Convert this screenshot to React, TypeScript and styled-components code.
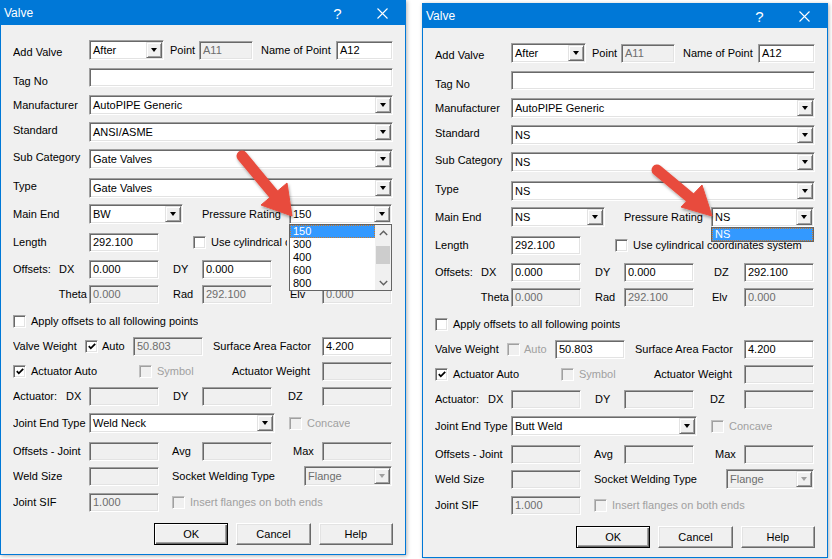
import styled, { createGlobalStyle } from 'styled-components';

const GlobalStyle = createGlobalStyle`
  html, body {
    margin: 0;
    padding: 0;
    background: #fff;
  }
  body {
    font-family: "Liberation Sans", Arial, sans-serif;
    font-size: 11px;
    color: #000;
  }
`;

type DialogProps = {
  top: number;
  standard: string;
  subCategory: string;
  valveType: string;
  mainEnd: string;
  pressure: string;
  ratings: string[];
  scroll?: boolean;
  autoWeight: boolean;
  jointEnd: string;
  // width left for the cylindrical label when the open list lies over it
  cylClip?: number;
  dzCovered?: boolean;
};

function Check({ checked, disabled, ml }: { checked?: boolean; disabled?: boolean; ml?: number }) {
  return (
    <CheckBox $disabled={disabled} $ml={ml}>
      {checked && (
        <svg width='8' height='7' viewBox='0 0 8 7'>
          <path d='M0.8 3.2 L2.8 5.3 L7.2 0.9' fill='none' stroke='#000' strokeWidth='1.8' />
        </svg>
      )}
    </CheckBox>
  );
}

function Combo({
  w,
  value,
  disabled,
  list,
  scroll,
}: {
  w: number;
  value: string;
  disabled?: boolean;
  list?: string[];
  scroll?: boolean;
}) {
  return (
    <ComboBox $w={w} $disabled={disabled}>
      <ComboValue $disabled={disabled}>{value}</ComboValue>
      <DropButton>
        <DownTriangle $disabled={disabled} />
      </DropButton>
      {list && (
        <DropList>
          <ListItems>
            {list.map((item, i) => (
              <ListItem key={item} $selected={i === 0}>
                {item}
              </ListItem>
            ))}
          </ListItems>
          {scroll && (
            <ScrollTrack>
              <ScrollArrow>
                <svg width='9' height='6' viewBox='0 0 9 6'>
                  <path d='M0.8 5 L4.5 1.3 L8.2 5' fill='none' stroke='#606060' strokeWidth='1.4' />
                </svg>
              </ScrollArrow>
              <Thumb />
              <ScrollArrow>
                <svg width='9' height='6' viewBox='0 0 9 6'>
                  <path d='M0.8 1 L4.5 4.7 L8.2 1' fill='none' stroke='#606060' strokeWidth='1.4' />
                </svg>
              </ScrollArrow>
            </ScrollTrack>
          )}
        </DropList>
      )}
    </ComboBox>
  );
}

function ValveDialog(p: DialogProps) {
  return (
    <Window $top={p.top}>
      <TitleBar>
        <Title>Valve</Title>
        <CaptionButton>
          <HelpMark>?</HelpMark>
        </CaptionButton>
        <CaptionButton>
          <svg width='11' height='11' viewBox='0 0 11 11'>
            <path d='M0.5 0.5 L10.5 10.5 M10.5 0.5 L0.5 10.5' stroke='#fff' strokeWidth='1.1' />
          </svg>
        </CaptionButton>
      </TitleBar>
      <Body>
        <Row>
          <Label $w={76} $dy={2}>Add Valve</Label>
          <Combo w={75} value='After' />
          <Label $w={35} $pl={6}>Point</Label>
          <Field $w={54} $disabled>A11</Field>
          <Label $w={83} $pl={8}>Name of Point</Label>
          <Field $w={57}>A12</Field>
        </Row>
        <Row $mt={7}>
          <Label $w={76} $dy={4}>Tag No</Label>
          <Field $w={304} />
        </Row>
        <Row $mt={8}>
          <Label $w={76}>Manufacturer</Label>
          <Combo w={304} value='AutoPIPE Generic' />
        </Row>
        <Row $mt={7}>
          <Label $w={76} $dy={-2}>Standard</Label>
          <Combo w={304} value={p.standard} />
        </Row>
        <Row $mt={7}>
          <Label $w={76} $dy={-2}>Sub Category</Label>
          <Combo w={304} value={p.subCategory} />
        </Row>
        <Row $mt={9}>
          <Label $w={76} $dy={-2}>Type</Label>
          <Combo w={304} value={p.valveType} />
        </Row>
        <Row $mt={6}>
          <Label $w={76}>Main End</Label>
          <Combo w={94} value={p.mainEnd} />
          <Label $w={106} $pl={19}>Pressure Rating</Label>
          <Combo w={103} value={p.pressure} list={p.ratings} scroll={p.scroll} />
        </Row>
        <Row $mt={8}>
          <Label $w={76}>Length</Label>
          <Field $w={70}>292.100</Field>
          <Check ml={34} />
          <Label $pl={5} $clip={p.cylClip}>
            Use cylindrical coordinates system
          </Label>
        </Row>
        <Row $mt={7}>
          <Label $w={76}>
            <Lead $w={46}>Offsets:</Lead>DX
          </Label>
          <Field $w={70}>0.000</Field>
          <Label $w={43} $pl={14}>DY</Label>
          <Field $w={70}>0.000</Field>
          <Label $w={50} $pl={20} $covered={p.dzCovered}>DZ</Label>
          <Field $w={70} $covered={p.dzCovered}>292.100</Field>
        </Row>
        <Row $mt={5}>
          <Label $w={76} $right $pr={2}>Theta</Label>
          <Field $w={70} $disabled>0.000</Field>
          <Label $w={43} $pl={14}>Rad</Label>
          <Field $w={70} $disabled>292.100</Field>
          <Label $w={50} $pl={18}>Elv</Label>
          <Field $w={70} $disabled>0.000</Field>
        </Row>
        <Row $mt={7}>
          <Check />
          <Label $pl={5}>Apply offsets to all following points</Label>
        </Row>
        <Row $mt={5}>
          <Label $w={72}>Valve Weight</Label>
          <Check checked={p.autoWeight} disabled={!p.autoWeight} />
          <Label $w={35} $pl={4} $dim={!p.autoWeight}>Auto</Label>
          <Field $w={70} $disabled={p.autoWeight}>50.803</Field>
          <Label $w={119} $pl={10}>Surface Area Factor</Label>
          <Field $w={70}>4.200</Field>
        </Row>
        <Row $mt={5}>
          <Check checked />
          <Label $w={113} $pl={5}>Actuator Auto</Label>
          <Check disabled />
          <Label $w={60} $pl={5} $dim>Symbol</Label>
          <Label $w={110} $right $pr={12}>Actuator Weight</Label>
          <Field $w={70} $disabled />
        </Row>
        <Row $mt={5}>
          <Label $w={76}>
            <Lead $w={53}>Actuator:</Lead>DX
          </Label>
          <Field $w={70} $disabled />
          <Label $w={43} $pl={14}>DY</Label>
          <Field $w={70} $disabled />
          <Label $w={50} $pl={16}>DZ</Label>
          <Field $w={70} $disabled />
        </Row>
        <Row $mt={7}>
          <Label $w={76}>Joint End Type</Label>
          <Combo w={186} value={p.jointEnd} />
          <Check disabled ml={14} />
          <Label $pl={5} $dim>Concave</Label>
        </Row>
        <Row $mt={8}>
          <Label $w={76}>Offsets - Joint</Label>
          <Field $w={70} $disabled />
          <Label $w={43} $pl={13}>Avg</Label>
          <Field $w={70} $disabled />
          <Label $w={50} $pl={21}>Max</Label>
          <Field $w={70} $disabled />
        </Row>
        <Row $mt={5}>
          <Label $w={76}>Weld Size</Label>
          <Field $w={70} $disabled />
          <Label $w={145} $pl={13}>Socket Welding Type</Label>
          <Combo w={88} value='Flange' disabled />
        </Row>
        <Row $mt={6}>
          <Label $w={76}>Joint SIF</Label>
          <Field $w={70} $disabled>1.000</Field>
          <Check disabled ml={13} />
          <Label $pl={5} $dim>Insert flanges on both ends</Label>
        </Row>
        <ButtonRow>
          <Button $default>OK</Button>
          <Button>Cancel</Button>
          <Button>Help</Button>
        </ButtonRow>
      </Body>
    </Window>
  );
}

function App() {
  return (
    <>
      <GlobalStyle />
      <Screen>
        <ValveDialog
          top={0}
          standard='ANSI/ASME'
          subCategory='Gate Valves'
          valveType='Gate Valves'
          mainEnd='BW'
          pressure='150'
          ratings={['150', '300', '400', '600', '800']}
          scroll
          autoWeight
          jointEnd='Weld Neck'
          cylClip={81}
          dzCovered
        />
        <ValveDialog
          top={3}
          standard='NS'
          subCategory='NS'
          valveType='NS'
          mainEnd='NS'
          pressure='NS'
          ratings={['NS']}
          autoWeight={false}
          jointEnd='Butt Weld'
        />
        <ArrowLayer viewBox='0 0 832 559' width={832} height={559}>
          <defs>
            <filter id='arrowShadow' x='-20%' y='-20%' width='140%' height='140%'>
              <feDropShadow dx='1' dy='2' stdDeviation='1.5' floodColor='#000' floodOpacity='0.35' />
            </filter>
          </defs>
          <g filter='url(#arrowShadow)' fill='#e84c3d' stroke='#e84c3d'>
            <line x1='242' y1='156' x2='276' y2='197' strokeWidth='11' strokeLinecap='round' />
            <polygon points='292,216 261,205 287,183' strokeWidth='1' strokeLinejoin='round' />
            <line x1='657' y1='170' x2='693' y2='200' strokeWidth='11' strokeLinecap='round' />
            <polygon points='712,216 681,207 702,185' strokeWidth='1' strokeLinejoin='round' />
          </g>
        </ArrowLayer>
      </Screen>
    </>
  );
}

export default App;

const Screen = styled.div`
  position: relative;
  width: 832px;
  height: 559px;
  overflow: hidden;
  display: flex;
  align-items: flex-start;
  gap: 16px;
  background: #fff;
`;

const Window = styled.section<{ $top: number }>`
  flex: none;
  box-sizing: border-box;
  width: 406px;
  height: 555px;
  margin-top: ${(p) => p.$top}px;
  border: 1px solid #0078d7;
  background: #f0f0f0;
  box-shadow: 1px 1px 4px rgba(0, 0, 0, 0.3);
  display: flex;
  flex-direction: column;
`;

const TitleBar = styled.div`
  flex: none;
  height: 24px;
  display: flex;
  align-items: center;
  background: #0078d7;
  color: #fff;
`;

const Title = styled.span`
  flex: 1;
  padding-left: 3px;
  font-size: 12px;
`;

const CaptionButton = styled.span`
  width: 45px;
  height: 24px;
  display: flex;
  align-items: center;
  justify-content: center;
`;

const HelpMark = styled.span`
  font-size: 15px;
  line-height: 1;
`;

const Body = styled.div`
  flex: 1;
  display: flex;
  flex-direction: column;
  padding: 15px 12px 0 12px;
`;

const Row = styled.div<{ $mt?: number }>`
  flex: none;
  height: 20px;
  margin-top: ${(p) => p.$mt ?? 0}px;
  display: flex;
  align-items: center;
`;

const Label = styled.span<{
  $w?: number;
  $pl?: number;
  $pr?: number;
  $dy?: number;
  $right?: boolean;
  $dim?: boolean;
  $clip?: number;
  $covered?: boolean;
}>`
  flex: none;
  box-sizing: border-box;
  width: ${(p) => (p.$w ? `${p.$w}px` : 'auto')};
  max-width: ${(p) => (p.$clip ? `${p.$clip}px` : 'none')};
  overflow: hidden;
  padding-left: ${(p) => p.$pl ?? 0}px;
  padding-right: ${(p) => p.$pr ?? 0}px;
  margin-top: ${(p) => (p.$dy ?? 0) * 2}px;
  text-align: ${(p) => (p.$right ? 'right' : 'left')};
  color: ${(p) => (p.$dim ? '#a0a0a0' : '#000')};
  visibility: ${(p) => (p.$covered ? 'hidden' : 'visible')};
  white-space: nowrap;
`;

const Lead = styled.span<{ $w: number }>`
  display: inline-block;
  width: ${(p) => p.$w}px;
`;

const Field = styled.div<{ $w: number; $disabled?: boolean; $covered?: boolean }>`
  flex: none;
  box-sizing: border-box;
  width: ${(p) => p.$w}px;
  height: 19px;
  padding: 0 3px;
  line-height: 17px;
  background: ${(p) => (p.$disabled ? '#f0f0f0' : '#fff')};
  color: ${(p) => (p.$disabled ? '#6d6d6d' : '#000')};
  border: 1px solid;
  border-color: #a0a0a0 #fff #fff #a0a0a0;
  box-shadow: inset 1px 1px 0 #696969, inset -1px -1px 0 #e3e3e3;
  visibility: ${(p) => (p.$covered ? 'hidden' : 'visible')};
  white-space: nowrap;
  overflow: hidden;
`;

const ComboBox = styled.div<{ $w: number; $disabled?: boolean }>`
  position: relative;
  flex: none;
  box-sizing: border-box;
  width: ${(p) => p.$w}px;
  height: 20px;
  padding: 1px;
  display: flex;
  background: ${(p) => (p.$disabled ? '#f0f0f0' : '#fff')};
  border: 1px solid;
  border-color: #a0a0a0 #fff #fff #a0a0a0;
  box-shadow: inset 1px 1px 0 #696969, inset -1px -1px 0 #e3e3e3;
`;

const ComboValue = styled.span<{ $disabled?: boolean }>`
  flex: 1;
  padding-left: 2px;
  line-height: 16px;
  color: ${(p) => (p.$disabled ? '#6d6d6d' : '#000')};
  white-space: nowrap;
  overflow: hidden;
`;

const DropButton = styled.span`
  flex: none;
  box-sizing: border-box;
  width: 16px;
  display: flex;
  align-items: center;
  justify-content: center;
  background: #f0f0f0;
  border: 1px solid;
  border-color: #e3e3e3 #696969 #696969 #e3e3e3;
  box-shadow: inset 1px 1px 0 #fff, inset -1px -1px 0 #a0a0a0;
`;

const DownTriangle = styled.span<{ $disabled?: boolean }>`
  width: 0;
  height: 0;
  border-left: 3.5px solid transparent;
  border-right: 3.5px solid transparent;
  border-top: 4px solid ${(p) => (p.$disabled ? '#a0a0a0' : '#000')};
`;

const DropList = styled.div`
  position: absolute;
  z-index: 5;
  left: -1px;
  top: calc(100% + 1px);
  width: calc(100% + 2px);
  box-sizing: border-box;
  display: flex;
  border: 1px solid #646464;
  background: #fff;
`;

const ListItems = styled.div`
  flex: 1;
  display: flex;
  flex-direction: column;
`;

const ListItem = styled.div<{ $selected?: boolean }>`
  height: 13px;
  line-height: 13px;
  padding-left: 3px;
  background: ${(p) => (p.$selected ? '#3399ff' : '#fff')};
  color: ${(p) => (p.$selected ? '#fff' : '#000')};
  outline: ${(p) => (p.$selected ? '1px dotted #c8792c' : 'none')};
  outline-offset: -1px;
`;

const ScrollTrack = styled.div`
  flex: none;
  width: 16px;
  display: flex;
  flex-direction: column;
  background: #f0f0f0;
`;

const ScrollArrow = styled.div`
  height: 15px;
  display: flex;
  align-items: center;
  justify-content: center;
`;

const Thumb = styled.div`
  flex: none;
  height: 18px;
  margin: 6px 1px auto 1px;
  background: #cdcdcd;
`;

const CheckBox = styled.span<{ $disabled?: boolean; $ml?: number }>`
  flex: none;
  box-sizing: border-box;
  width: 13px;
  height: 13px;
  margin-left: ${(p) => p.$ml ?? 0}px;
  display: flex;
  align-items: center;
  justify-content: center;
  background: ${(p) => (p.$disabled ? '#f0f0f0' : '#fff')};
  border: 1px solid;
  border-color: ${(p) => (p.$disabled ? '#c0c0c0 #fff #fff #c0c0c0' : '#a0a0a0 #fff #fff #a0a0a0')};
  box-shadow: ${(p) =>
    p.$disabled ? 'inset 1px 1px 0 #a0a0a0' : 'inset 1px 1px 0 #696969, inset -1px -1px 0 #e3e3e3'};
`;

const ButtonRow = styled.div`
  flex: none;
  margin-top: 11px;
  padding-left: 141px;
  display: flex;
  gap: 8px;
`;

const Button = styled.button<{ $default?: boolean }>`
  box-sizing: border-box;
  width: 75px;
  height: 22px;
  padding: 0;
  font-family: "Liberation Sans", Arial, sans-serif;
  font-size: 11px;
  color: #000;
  background: #f0f0f0;
  border: 1px solid;
  border-color: ${(p) => (p.$default ? '#000' : '#fff #696969 #696969 #fff')};
  box-shadow: ${(p) =>
    p.$default
      ? 'inset 1px 1px 0 #fff, inset -1px -1px 0 #696969, inset -2px -2px 0 #a0a0a0'
      : 'inset -1px -1px 0 #a0a0a0, inset 1px 1px 0 #e3e3e3'};
`;

const ArrowLayer = styled.svg`
  position: absolute;
  left: 0;
  top: 0;
  z-index: 10;
  pointer-events: none;
`;
